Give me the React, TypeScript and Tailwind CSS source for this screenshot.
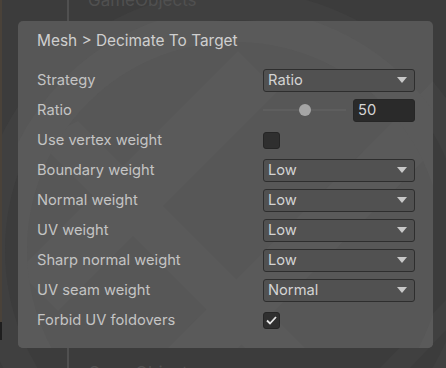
import React from "react";

type Row =
  | { label: string; kind: "select"; value: string }
  | { label: string; kind: "slider"; value: number }
  | { label: string; kind: "check"; checked: boolean };

const rows: Row[] = [
  { label: "Strategy", kind: "select", value: "Ratio" },
  { label: "Ratio", kind: "slider", value: 50 },
  { label: "Use vertex weight", kind: "check", checked: false },
  { label: "Boundary weight", kind: "select", value: "Low" },
  { label: "Normal weight", kind: "select", value: "Low" },
  { label: "UV weight", kind: "select", value: "Low" },
  { label: "Sharp normal weight", kind: "select", value: "Low" },
  { label: "UV seam weight", kind: "select", value: "Normal" },
  { label: "Forbid UV foldovers", kind: "check", checked: true },
];

function Select({ value }: { value: string }) {
  return (
    <div className="flex h-[23px] w-[152px] items-center justify-between rounded-[3px] border border-[#2e2e2e] bg-[#515151] pl-[4px] pr-[7px] text-[#d4d4d4]">
      <span>{value}</span>
      <svg width="10" height="6" viewBox="0 0 10 6">
        <path d="M0 0 H10 L5 6 Z" fill="#c8c8c8" />
      </svg>
    </div>
  );
}

function Slider({ value }: { value: number }) {
  return (
    <div className="flex w-[152px] items-center gap-[7px]">
      <div className="relative h-[12px] flex-1">
        <div className="absolute left-0 right-0 top-[5px] h-[2px] bg-[#5e5e5e]" />
        <div className="absolute left-[36px] top-0 h-[12px] w-[12px] rounded-full bg-[#a5a5a5]" />
      </div>
      <div className="flex h-[23px] w-[62px] items-center rounded-[3px] border border-[#262626] bg-[#2a2a2a] pl-[4px] text-[#d4d4d4]">
        {value}
      </div>
    </div>
  );
}

function Check({ checked }: { checked: boolean }) {
  return (
    <div className="flex h-[17px] w-[17px] items-center justify-center rounded-[3px] border border-[#252525] bg-[#2f2f2f]">
      {checked && (
        <svg width="11" height="9" viewBox="0 0 11 9">
          <path d="M1 4.5 L4 7.5 L10 1" stroke="#e6e6e6" strokeWidth="1.8" fill="none" />
        </svg>
      )}
    </div>
  );
}

export default function App() {
  return (
    <div
      className="relative h-[368px] w-[446px] overflow-hidden bg-[#3c3c3c] text-[14.7px]"
      style={{ fontFamily: "Inter, 'Noto Sans', sans-serif" }}
    >
      {/* hierarchy background */}
      <svg className="pointer-events-none absolute left-0 top-0" width="446" height="368">
        <circle cx="235" cy="250" r="245" fill="none" stroke="#404040" strokeWidth="30" />
        <path d="M380 368 L446 300 L446 330 L410 368 Z" fill="#404040" />
      </svg>
      <div className="absolute left-0 top-0 h-[322px] w-[2px] bg-[#4a4239]" />
      <div className="absolute left-0 top-[322px] h-[18px] w-[2px] bg-[#1e1e1e]" />
      <div className="absolute left-[67px] top-0 h-[21px] w-[2px] bg-[#505050]" />
      <div className="absolute left-[67px] top-[348px] h-[20px] w-[2px] bg-[#505050]" />
      <div className="absolute left-[88px] top-[-12px] text-[17px] leading-[24px] text-[#505050]">GameObjects</div>
      <div className="absolute left-[88px] top-[361px] text-[17px] leading-[24px] text-[#505050]">GameObjects</div>

      <div className="relative ml-[18px] mt-[21px] h-[327px] w-[415px] overflow-hidden rounded-[5px] bg-[#575757] pl-[19px] pr-[18px] text-[#c4c4c4]">
        <svg className="pointer-events-none absolute left-0 top-0" width="415" height="327">
          <g fill="#5a5a5a">
            <path d="M0 250 L220 30 L260 70 L40 290 Z" />
            <path d="M150 327 L415 60 L415 130 L220 327 Z" />
            <path d="M60 100 L300 340 L240 340 L20 120 Z" />
          </g>
          <circle cx="217" cy="229" r="225" fill="none" stroke="#5a5a5a" strokeWidth="34" />
        </svg>
        <div className="relative flex h-[40px] items-center text-[15.4px] text-[#cfcfcf]">
          Mesh &gt; Decimate To Target
        </div>
        <div className="relative mt-[4px] flex flex-col">
          {rows.map((r) => (
            <div key={r.label} className="flex h-[30px] items-center">
              <div className="w-[226px]">{r.label}</div>
              {r.kind === "select" && <Select value={r.value} />}
              {r.kind === "slider" && <Slider value={r.value} />}
              {r.kind === "check" && <Check checked={r.checked} />}
            </div>
          ))}
        </div>
      </div>
    </div>
  );
}
